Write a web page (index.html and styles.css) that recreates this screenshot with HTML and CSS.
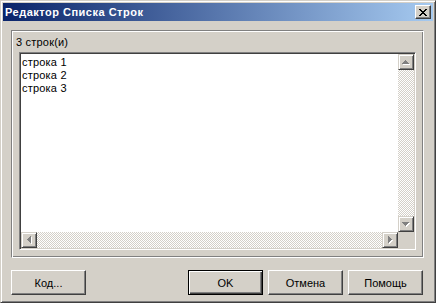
FILE: index.html
```html
<!DOCTYPE html>
<html lang="ru">

<head>
    <meta charset="UTF-8">
    <title>Редактор Списка Строк</title>
    <link rel="stylesheet" href="styles.css">
</head>

<body>
    <div class="window">
        <div class="title-bar">
            <span class="title-text">Редактор Списка Строк</span>
            <button class="close-btn" type="button">
                <svg width="8" height="7" viewBox="0 0 8 7" shape-rendering="crispEdges">
                    <path d="M0 0h2v1h-2z M6 0h2v1h-2z M1 1h2v1h-2z M5 1h2v1h-2z M2 2h4v1h-4z M3 3h2v1h-2z M2 4h4v1h-4z M1 5h2v1h-2z M5 5h2v1h-2z M0 6h2v1h-2z M6 6h2v1h-2z" fill="#000" />
                </svg>
            </button>
        </div>

        <div class="group-box">
            <div class="group-label">3 строк(и)</div>
            <div class="memo">
                <div class="memo-text">
                    <div>строка 1</div>
                    <div>строка 2</div>
                    <div>строка 3</div>
                </div>
                <div class="vscroll">
                    <div class="sb-btn">
                        <svg width="8" height="5" viewBox="0 0 8 5" shape-rendering="crispEdges">
                            <path d="M4 1h1v1h-1z M3 2h3v1h-3z M2 3h5v1h-5z M1 4h7v1h-7z" fill="#fff" />
                            <path d="M3 0h1v1h-1z M2 1h3v1h-3z M1 2h5v1h-5z M0 3h7v1h-7z" fill="#808080" />
                        </svg>
                    </div>
                    <div class="sb-track"></div>
                    <div class="sb-btn">
                        <svg width="8" height="5" viewBox="0 0 8 5" shape-rendering="crispEdges">
                            <path d="M1 1h7v1h-7z M2 2h5v1h-5z M3 3h3v1h-3z M4 4h1v1h-1z" fill="#fff" />
                            <path d="M0 0h7v1h-7z M1 1h5v1h-5z M2 2h3v1h-3z M3 3h1v1h-1z" fill="#808080" />
                        </svg>
                    </div>
                </div>
                <div class="hscroll">
                    <div class="sb-btn">
                        <svg width="5" height="8" viewBox="0 0 5 8" shape-rendering="crispEdges">
                            <path d="M4 1h1v7h-1z M3 2h1v5h-1z M2 3h1v3h-1z M1 4h1v1h-1z" fill="#fff" />
                            <path d="M3 0h1v7h-1z M2 1h1v5h-1z M1 2h1v3h-1z M0 3h1v1h-1z" fill="#808080" />
                        </svg>
                    </div>
                    <div class="sb-track"></div>
                    <div class="sb-btn">
                        <svg width="5" height="8" viewBox="0 0 5 8" shape-rendering="crispEdges">
                            <path d="M1 1h1v7h-1z M2 2h1v5h-1z M3 3h1v3h-1z M4 4h1v1h-1z" fill="#fff" />
                            <path d="M0 0h1v7h-1z M1 1h1v5h-1z M2 2h1v3h-1z M3 3h1v1h-1z" fill="#808080" />
                        </svg>
                    </div>
                </div>
                <div class="sb-corner"></div>
            </div>
        </div>

        <div class="button-row">
            <button class="btn" type="button">Код...</button>
            <button class="btn default push-right" type="button">OK</button>
            <button class="btn" type="button">Отмена</button>
            <button class="btn" type="button">Помощь</button>
        </div>
    </div>
</body>

</html>
```

FILE: styles.css
```css
body {
    margin: 0;
    background: #d4d0c8;
    font-family: 'Liberation Sans', Arial, sans-serif;
    font-size: 11px;
    color: #000;
}

.window {
    width: 436px;
    height: 303px;
    box-sizing: border-box;
    padding: 2px;
    border: 1px solid;
    border-color: #d4d0c8 #404040 #404040 #d4d0c8;
    box-shadow: inset 1px 1px #fff, inset -1px -1px #808080;
    background: #d4d0c8;
    display: flex;
    flex-direction: column;
}

.title-bar {
    height: 18px;
    flex: none;
    display: flex;
    align-items: center;
    justify-content: space-between;
    padding: 0 2px;
    background: linear-gradient(to right, #0a246a, #a6caf0);
}

.title-text {
    color: #fff;
    font-weight: bold;
    font-size: 11px;
    letter-spacing: 0.5px;
    white-space: nowrap;
}

.close-btn {
    width: 16px;
    height: 14px;
    padding: 0;
    margin: 0;
    box-sizing: border-box;
    background: #d4d0c8;
    border: 1px solid;
    border-color: #fff #404040 #404040 #fff;
    box-shadow: inset -1px -1px #808080;
    display: flex;
    align-items: center;
    justify-content: center;
}

.group-box {
    margin: 9px 0 0 8px;
    width: 413px;
    height: 228px;
    box-sizing: border-box;
    padding: 5px 7px 7px 4px;
    border: 1px solid;
    border-color: #808080 #fff #fff #808080;
    box-shadow: inset 1px 1px #fff, inset -1px -1px #808080;
}

.group-label {
    line-height: 13px;
    height: 13px;
    margin-bottom: 3px;
    letter-spacing: 0.2px;
}

.memo {
    margin-left: 3px;
    height: 198px;
    box-sizing: border-box;
    padding: 1px;
    border: 1px solid;
    border-color: #808080 #fff #fff #808080;
    box-shadow: inset 1px 1px #404040, inset -1px -1px #d4d0c8;
    background: #fff;
    display: grid;
    grid-template-columns: 1fr 16px;
    grid-template-rows: 1fr 16px;
}

.memo-text {
    background: #fff;
    padding: 2px 0 0 1px;
    line-height: 13px;
    letter-spacing: 0.2px;
    overflow: hidden;
}

.vscroll {
    display: flex;
    flex-direction: column;
}

.hscroll {
    display: flex;
}

.sb-track {
    flex: 1;
    background-image: repeating-conic-gradient(#d4d0c8 0 25%, #fff 0 50%);
    background-size: 2px 2px;
}

.sb-btn {
    width: 16px;
    height: 16px;
    flex: none;
    box-sizing: border-box;
    background: #d4d0c8;
    border: 1px solid;
    border-color: #d4d0c8 #404040 #404040 #d4d0c8;
    box-shadow: inset 1px 1px #fff, inset -1px -1px #808080;
    display: flex;
    align-items: center;
    justify-content: center;
}

.sb-corner {
    background: #d4d0c8;
}

.button-row {
    display: flex;
    gap: 5px;
    margin: 12px 0 0 8px;
    width: 412px;
}

.btn {
    width: 75px;
    height: 25px;
    padding: 0;
    box-sizing: border-box;
    font-family: 'Liberation Sans', Arial, sans-serif;
    font-size: 11px;
    color: #000;
    background: #d4d0c8;
    border: 1px solid;
    border-color: #fff #404040 #404040 #fff;
    box-shadow: inset -1px -1px #808080;
}

.btn.default {
    border-color: #000;
    box-shadow: inset 1px 1px #fff, inset -1px -1px #404040, inset -2px -2px #808080;
}

.push-right {
    margin-left: auto;
}
```
